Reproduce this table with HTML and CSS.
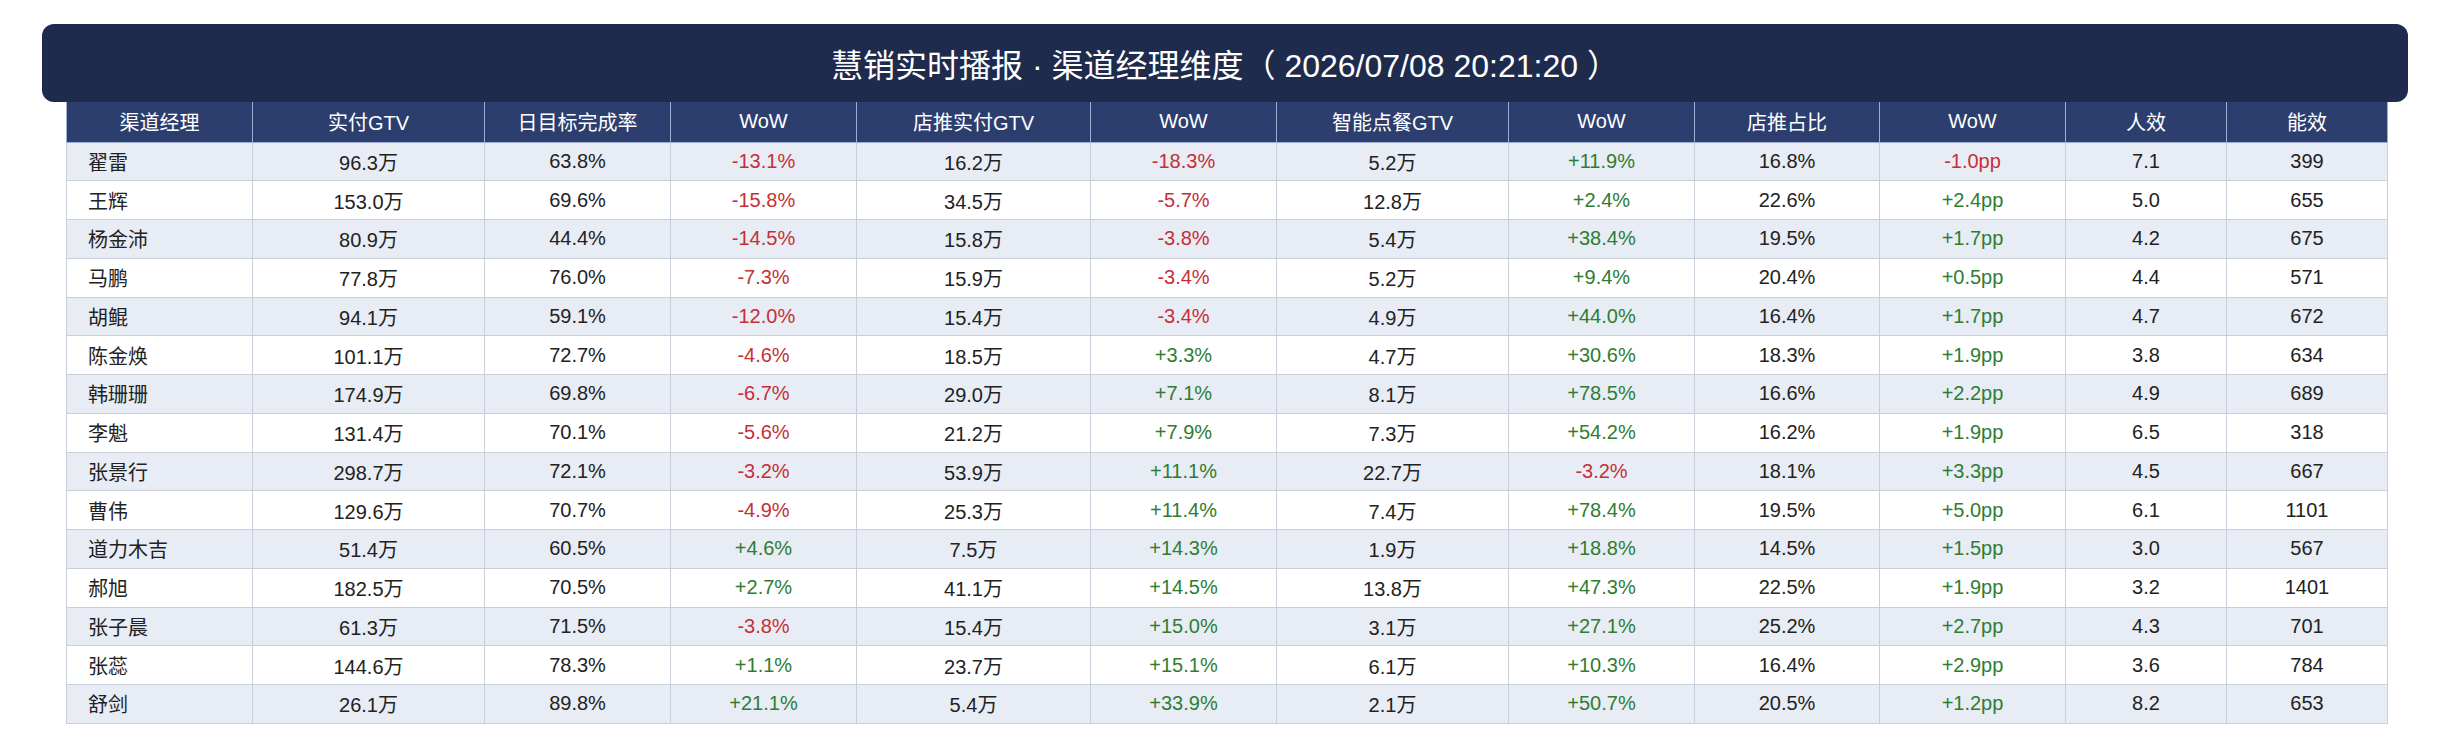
FILE: index.html
```html
<!DOCTYPE html>
<html lang="zh-CN">
<head>
<meta charset="utf-8">
<title>慧销实时播报</title>
<link rel="stylesheet" href="styles.css">
</head>
<body>
<div class="report">
  <div class="title">慧销实时播报 · 渠道经理维度（ 2026/07/08 20:21:20 ）</div>
  <table class="grid">
    <colgroup>
      <col class="c-name"><col class="c-gtv"><col class="c-w"><col class="c-w">
      <col class="c-gtv2"><col class="c-w"><col class="c-gtv"><col class="c-w">
      <col class="c-w2"><col class="c-w"><col class="c-s"><col class="c-s">
    </colgroup>
    <thead>
      <tr><th>渠道经理</th><th>实付GTV</th><th>日目标完成率</th><th>WoW</th><th>店推实付GTV</th><th>WoW</th><th>智能点餐GTV</th><th>WoW</th><th>店推占比</th><th>WoW</th><th>人效</th><th>能效</th></tr>
    </thead>
    <tbody>
      <tr><td>翟雷</td><td>96.3万</td><td>63.8%</td><td class="neg">-13.1%</td><td>16.2万</td><td class="neg">-18.3%</td><td>5.2万</td><td class="pos">+11.9%</td><td>16.8%</td><td class="neg">-1.0pp</td><td>7.1</td><td>399</td></tr>
      <tr><td>王辉</td><td>153.0万</td><td>69.6%</td><td class="neg">-15.8%</td><td>34.5万</td><td class="neg">-5.7%</td><td>12.8万</td><td class="pos">+2.4%</td><td>22.6%</td><td class="pos">+2.4pp</td><td>5.0</td><td>655</td></tr>
      <tr><td>杨金沛</td><td>80.9万</td><td>44.4%</td><td class="neg">-14.5%</td><td>15.8万</td><td class="neg">-3.8%</td><td>5.4万</td><td class="pos">+38.4%</td><td>19.5%</td><td class="pos">+1.7pp</td><td>4.2</td><td>675</td></tr>
      <tr><td>马鹏</td><td>77.8万</td><td>76.0%</td><td class="neg">-7.3%</td><td>15.9万</td><td class="neg">-3.4%</td><td>5.2万</td><td class="pos">+9.4%</td><td>20.4%</td><td class="pos">+0.5pp</td><td>4.4</td><td>571</td></tr>
      <tr><td>胡鲲</td><td>94.1万</td><td>59.1%</td><td class="neg">-12.0%</td><td>15.4万</td><td class="neg">-3.4%</td><td>4.9万</td><td class="pos">+44.0%</td><td>16.4%</td><td class="pos">+1.7pp</td><td>4.7</td><td>672</td></tr>
      <tr><td>陈金焕</td><td>101.1万</td><td>72.7%</td><td class="neg">-4.6%</td><td>18.5万</td><td class="pos">+3.3%</td><td>4.7万</td><td class="pos">+30.6%</td><td>18.3%</td><td class="pos">+1.9pp</td><td>3.8</td><td>634</td></tr>
      <tr><td>韩珊珊</td><td>174.9万</td><td>69.8%</td><td class="neg">-6.7%</td><td>29.0万</td><td class="pos">+7.1%</td><td>8.1万</td><td class="pos">+78.5%</td><td>16.6%</td><td class="pos">+2.2pp</td><td>4.9</td><td>689</td></tr>
      <tr><td>李魁</td><td>131.4万</td><td>70.1%</td><td class="neg">-5.6%</td><td>21.2万</td><td class="pos">+7.9%</td><td>7.3万</td><td class="pos">+54.2%</td><td>16.2%</td><td class="pos">+1.9pp</td><td>6.5</td><td>318</td></tr>
      <tr><td>张景行</td><td>298.7万</td><td>72.1%</td><td class="neg">-3.2%</td><td>53.9万</td><td class="pos">+11.1%</td><td>22.7万</td><td class="neg">-3.2%</td><td>18.1%</td><td class="pos">+3.3pp</td><td>4.5</td><td>667</td></tr>
      <tr><td>曹伟</td><td>129.6万</td><td>70.7%</td><td class="neg">-4.9%</td><td>25.3万</td><td class="pos">+11.4%</td><td>7.4万</td><td class="pos">+78.4%</td><td>19.5%</td><td class="pos">+5.0pp</td><td>6.1</td><td>1101</td></tr>
      <tr><td>道力木吉</td><td>51.4万</td><td>60.5%</td><td class="pos">+4.6%</td><td>7.5万</td><td class="pos">+14.3%</td><td>1.9万</td><td class="pos">+18.8%</td><td>14.5%</td><td class="pos">+1.5pp</td><td>3.0</td><td>567</td></tr>
      <tr><td>郝旭</td><td>182.5万</td><td>70.5%</td><td class="pos">+2.7%</td><td>41.1万</td><td class="pos">+14.5%</td><td>13.8万</td><td class="pos">+47.3%</td><td>22.5%</td><td class="pos">+1.9pp</td><td>3.2</td><td>1401</td></tr>
      <tr><td>张子晨</td><td>61.3万</td><td>71.5%</td><td class="neg">-3.8%</td><td>15.4万</td><td class="pos">+15.0%</td><td>3.1万</td><td class="pos">+27.1%</td><td>25.2%</td><td class="pos">+2.7pp</td><td>4.3</td><td>701</td></tr>
      <tr><td>张蕊</td><td>144.6万</td><td>78.3%</td><td class="pos">+1.1%</td><td>23.7万</td><td class="pos">+15.1%</td><td>6.1万</td><td class="pos">+10.3%</td><td>16.4%</td><td class="pos">+2.9pp</td><td>3.6</td><td>784</td></tr>
      <tr><td>舒剑</td><td>26.1万</td><td>89.8%</td><td class="pos">+21.1%</td><td>5.4万</td><td class="pos">+33.9%</td><td>2.1万</td><td class="pos">+50.7%</td><td>20.5%</td><td class="pos">+1.2pp</td><td>8.2</td><td>653</td></tr>
    </tbody>
  </table>
</div>
</body>
</html>
```

FILE: styles.css
```css
html, body {
  margin: 0;
  padding: 0;
  background: #ffffff;
}

body {
  font-family: "Liberation Sans", "Noto Sans CJK SC", Arial, sans-serif;
  color: #222222;
}

.report {
  width: 2366px;
  margin-left: 42px;
  padding-top: 24px;
}

.title {
  height: 78px;
  display: flex;
  align-items: center;
  justify-content: center;
  background: #1e2b4d;
  color: #ffffff;
  border-radius: 12px;
  font-size: 32px;
  white-space: pre;
}

.grid {
  width: 2319px;
  margin: 0 24px;
  border-collapse: collapse;
  table-layout: fixed;
  font-size: 20px;
}

.c-name { width: 186px; }
.c-gtv { width: 232px; }
.c-gtv2 { width: 234px; }
.c-w { width: 186px; }
.c-w2 { width: 185px; }
.c-s { width: 161px; }

.grid th {
  height: 40px;
  padding: 0 4px;
  background: #2c3e6e;
  color: #ffffff;
  font-weight: normal;
  text-align: center;
  border: 1px solid #9eadd0;
  border-top: none;
  box-sizing: border-box;
}

.grid td {
  height: 38.75px;
  padding: 0 4px;
  text-align: center;
  border: 1px solid #c8cfdb;
  box-sizing: border-box;
  white-space: nowrap;
}

.grid td:first-child {
  text-align: left;
  padding-left: 21px;
}

.grid tbody tr:nth-child(odd) td {
  background: #e8ecf5;
}

.grid tbody tr:nth-child(even) td {
  background: #ffffff;
}

.neg { color: #c62f35; }
.pos { color: #2e7d32; }
```
